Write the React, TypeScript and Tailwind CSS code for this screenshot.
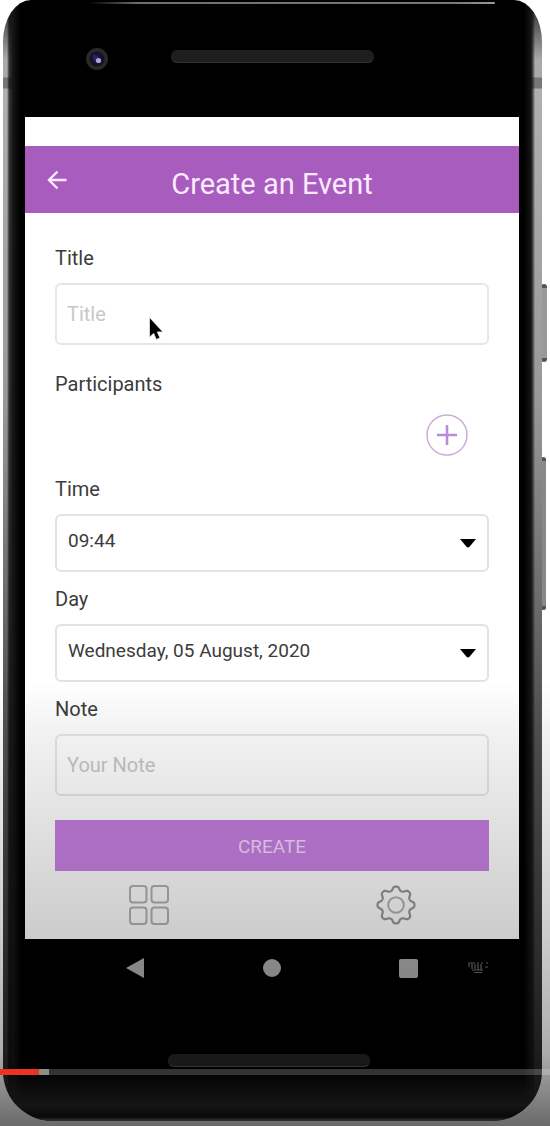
import { useState, type ReactNode } from "react";

const GEAR_OUTLINE =
  Array.from({ length: 240 }, (_, i) => {
    const a = (i / 240) * Math.PI * 2;
    const r = 16.6 + 2.2 * Math.tanh(1.3 * Math.cos(8 * a));
    return `${i === 0 ? "M" : "L"}${(20 + r * Math.cos(a)).toFixed(2)} ${(20 + r * Math.sin(a)).toFixed(2)}`;
  }).join(" ") + "Z";

function FieldLabel({ htmlFor, children }: { htmlFor: string; children: ReactNode }) {
  return (
    <label htmlFor={htmlFor} className="mb-[13px] block text-xl leading-6 text-[#3c3c3c]">
      {children}
    </label>
  );
}

function TextField({ id, label, placeholder }: { id: string; label: string; placeholder: string }) {
  const [value, setValue] = useState("");
  return (
    <div>
      <FieldLabel htmlFor={id}>{label}</FieldLabel>
      <input
        id={id}
        type="text"
        value={value}
        placeholder={placeholder}
        onChange={(e) => setValue(e.target.value)}
        className="block h-[62px] w-full rounded-md border-2 border-[#e6e6e6] bg-transparent px-[10px] text-xl text-[#3c3c3c] outline-none placeholder:text-[#c8c8c8]"
      />
    </div>
  );
}

function SelectField({ id, label, option }: { id: string; label: string; option: string }) {
  return (
    <div>
      <FieldLabel htmlFor={id}>{label}</FieldLabel>
      <div className="relative">
        <select
          id={id}
          className="block h-[58px] w-full appearance-none rounded-md border-2 border-[#e2e2e2] bg-transparent px-[11px] pb-[3px] text-[19px] text-[#3c3c3c] outline-none"
        >
          <option>{option}</option>
        </select>
        <svg viewBox="0 0 16 9" className="pointer-events-none absolute right-[13px] top-[25px] h-[9px] w-4" aria-hidden="true">
          <path d="M0 0h16L9.5 7.8Q8 9.400 6.500 7.800Z" fill="#000" />
        </svg>
      </div>
    </div>
  );
}

function TopBezel() {
  return (
    <div className="relative h-[117px]">
      <div className="absolute left-16 right-6 top-[2px] h-[2px] rounded-full bg-[linear-gradient(90deg,transparent,#6f6f6f_12%,#777_90%,#999)]" />
      <svg viewBox="0 0 24 24" className="absolute left-[60px] top-[47px] size-6" aria-hidden="true">
        <circle cx="12" cy="12" r="11" fill="#292929" />
        <circle cx="12" cy="12" r="7.500" fill="#15132a" />
        <path d="M8 7l5 2 2 5-4 1-3-3z" fill="#23236e" />
        <circle cx="13.500" cy="13.500" r="2.600" fill="#a9a7dc" />
      </svg>
      <div className="absolute left-[146px] right-[145px] top-[50px] h-[13px] rounded-md border-b border-[#353535] bg-[#1e1e1e]" />
    </div>
  );
}

function SystemBar() {
  return (
    <div className="flex h-[58px] items-center pl-[101px] pr-[31px]">
      <button aria-label="Back" className="block">
        <svg viewBox="0 0 18 20" className="h-5 w-[18px]"><path d="M0 10 18 0v20z" fill="#b0b0b0" /></svg>
      </button>
      <div className="grow" />
      <button aria-label="Home" className="block">
        <svg viewBox="0 0 18 18" className="size-[18px]"><circle cx="9" cy="9" r="9" fill="#b0b0b0" /></svg>
      </button>
      <div className="grow" />
      <button aria-label="Recent apps" className="mr-[50px] block">
        <svg viewBox="0 0 19 19" className="size-[19px]"><rect width="19" height="19" rx="2" fill="#b0b0b0" /></svg>
      </button>
      <button aria-label="Keyboard" className="block">
        <svg viewBox="0 0 20 12" className="h-3 w-5" fill="none" stroke="#707070" strokeWidth="1.200">
          <path d="M0 1h7M9 1h2M13 1h2M18 1h2M1 2v3M4 2v5M7 2v5M10 2v6M13 2v6M17 5h3M4 8h11M6 10.500h8" />
        </svg>
      </button>
    </div>
  );
}

export default function App() {
  return (
    <main className="relative w-full overflow-hidden bg-white pb-[6px] pl-[3px] pr-2 font-[Roboto,sans-serif]">
      <div className="absolute right-[3px] top-[284px] h-[78px] w-[6px] rounded-sm border-y-4 border-[#555] bg-[#999]" />
      <div className="absolute right-[4px] top-[457px] h-[153px] w-[5px] rounded-sm border-y-4 border-[#555] bg-[#888]" />
      <div className="relative bg-[linear-gradient(90deg,#0000_4px,#000a_6px,#151515_10px,#000_18px,#000_calc(100%-18px),#151515_calc(100%-11px),#0008_calc(100%-9px),#0000_calc(100%-7px)),linear-gradient(180deg,#222_0,#aaa_60px,#aaa_77px,#777_78px,#777_88px,#b0b0b0_89px,#999_400px,#555_700px,#333_1000px,#222_100%)] pl-[22px] pr-[23px] [border-radius:28px_28px_50px_50px/42px_42px_50px_50px]">
        <TopBezel />
        <section className="bg-white">
          <div className="h-[29px]" />
          <header className="flex h-[67px] items-center bg-[#a75cbe] px-[22px]">
            <button aria-label="Go back" className="block w-5">
              <svg viewBox="0 0 20 20" className="size-5" fill="none" stroke="#fbeaff" strokeWidth="2.400">
                <path d="M19.500 10H2M10.500 1.500 2 10l8.500 8.500" />
              </svg>
            </button>
            <h1 className="grow pr-5 pt-2 text-center text-[29px] leading-8 text-[#fbeaff]">Create an Event</h1>
          </header>
          <form className="px-[30px] pt-[33px]" onSubmit={(e) => e.preventDefault()}>
            <TextField id="title" label="Title" placeholder="Title" />
            <div className="mb-[21px] mt-[27px]">
              <h2 className="text-xl leading-6 text-[#3c3c3c]">Participants</h2>
              <div className="mt-[18px] flex justify-end pr-[21px]">
                <button type="button" aria-label="Add participant" className="block">
                  <svg viewBox="0 0 42 42" className="size-[42px]" fill="none">
                    <circle cx="21" cy="21" r="20" stroke="#cba9d8" strokeWidth="1.400" />
                    <path d="M21 11v20M11 21h20" stroke="#b98bdc" strokeWidth="2.600" />
                  </svg>
                </button>
              </div>
            </div>
            <div className="flex flex-col gap-[15px]">
              <SelectField id="time" label="Time" option="09:44" />
              <SelectField id="day" label="Day" option="Wednesday, 05 August, 2020" />
              <TextField id="note" label="Note" placeholder="Your Note" />
            </div>
            <button type="submit" className="mt-6 block h-[51px] w-full bg-[linear-gradient(#c47de0,#cb82e4)] pt-1 text-[19px] text-[#f3d9fc]">
              CREATE
            </button>
          </form>
          <nav className="flex justify-around pb-[14px] pt-[14px]">
            <button aria-label="Dashboard" className="block">
              <svg viewBox="0 0 40 40" className="size-10" fill="none" stroke="#b2b2b8" strokeWidth="2">
                <rect x="1" y="1" width="16.500" height="16.500" rx="3" />
                <rect x="22.500" y="1" width="16.500" height="16.500" rx="3" />
                <rect x="1" y="22.500" width="16.500" height="16.500" rx="3" />
                <rect x="22.500" y="22.500" width="16.500" height="16.500" rx="3" />
              </svg>
            </button>
            <button aria-label="Settings" className="block">
              <svg viewBox="0 0 40 40" className="size-10" fill="none">
                <path d={GEAR_OUTLINE} stroke="#989898" strokeWidth="2.200" strokeLinejoin="round" />
                <circle cx="20" cy="20" r="7.800" stroke="#b4b4b4" strokeWidth="2" />
              </svg>
            </button>
          </nav>
        </section>
        <SystemBar />
        <div className="h-[124px] pl-[143px] pr-[149px] pt-[57px]">
          <div className="h-[13px] rounded-md border-b border-[#555] bg-[#262626]" />
        </div>
        <div className="absolute inset-x-0 bottom-0 h-[50px] rounded-b-[50px] bg-[linear-gradient(#0000,#2c2c2c_70%,#111_92%,#666_98%)]" />
      </div>
      <svg viewBox="0 0 16 24" className="pointer-events-none absolute left-[148px] top-[316px] h-6 w-4" aria-hidden="true">
        <path d="M1.500 1.500v19.500l4.200-3.600 2.600 6 3.600-1.500-2.600-6h5.600z" fill="#000" stroke="#e4e4e4" strokeWidth="0.800" />
      </svg>
      <div className="pointer-events-none absolute inset-x-0 bottom-0 h-[446px] bg-[linear-gradient(#0000_0,#0000000d_50px,#0000001c_130px,#00000033_255px,#00000052_370px,#00000096_446px)]" />
      <div className="absolute inset-x-0 bottom-[52px] flex h-[6px] bg-white/20">
        <div className="w-[7%] bg-[#eb3323]" />
        <div className="w-[10px] bg-[#8c8c8c]" />
      </div>
    </main>
  );
}
